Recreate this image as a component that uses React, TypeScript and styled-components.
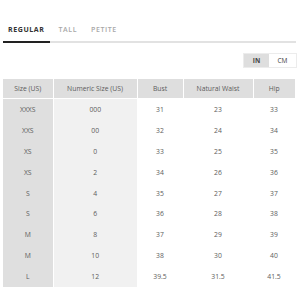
import React from "react";
import styled, { createGlobalStyle } from "styled-components";

const GlobalStyle = createGlobalStyle`
  body {
    margin: 0;
    background: #fff;
    font-family: "Open Sans", "Liberation Sans", sans-serif;
  }
`;

const Page = styled.div`
  width: 300px;
  padding: 20px 4px 0 3px;
  box-sizing: border-box;
`;

const Tabs = styled.div`
  display: flex;
  border-bottom: 2px solid #e2e2e2;
  height: 21px;
`;

const Tab = styled.div<{ $active?: boolean }>`
  font-size: 7px;
  font-weight: ${p => (p.$active ? 700 : 600)};
  letter-spacing: 0.6px;
  color: ${p => (p.$active ? "#333" : "#a8a8a8")};
  padding: 5px 5px 0;
  margin-right: 4px;
  margin-bottom: -2px;
  border-bottom: 2px solid ${p => (p.$active ? "#222" : "transparent")};
`;

const ToggleRow = styled.div`
  display: flex;
  justify-content: flex-end;
  margin-top: 10px;
  margin-right: -1px;
`;

const Toggle = styled.div`
  display: flex;
  border: 1px solid #ececec;
`;

const Unit = styled.div<{ $active?: boolean }>`
  width: ${p => (p.$active ? "25px" : "27px")};
  height: 13px;
  display: flex;
  align-items: center;
  justify-content: center;
  font-size: 6.5px;
  font-weight: ${p => (p.$active ? 700 : 400)};
  color: #444;
  background: ${p => (p.$active ? "#dedede" : "#fff")};
`;

const Table = styled.table`
  margin-top: 11px;
  width: 292px;
  border-collapse: collapse;
  table-layout: fixed;
  color: #5c5c5c;
  font-size: 6.8px;
`;

const Th = styled.th`
  height: 19px;
  padding: 0;
  font-weight: 400;
  background: #dedede;
  border-right: 1px solid #fff;
  border-bottom: 1px solid #fff;
  text-align: center;
  &:last-child {
    border-right: none;
  }
`;

const Td = styled.td<{ $tone?: "dark" | "light" }>`
  height: 20.9px;
  padding: 0;
  text-align: center;
  background: ${p =>
    p.$tone === "dark" ? "#dfdfdf" : p.$tone === "light" ? "#f1f1f1" : "#fff"};
  border-right: ${p => (p.$tone === "dark" ? "1px solid #fff" : "none")};
`;

const rows = [
  ["XXXS", "000", "31", "23", "33"],
  ["XXS", "00", "32", "24", "34"],
  ["XS", "0", "33", "25", "35"],
  ["XS", "2", "34", "26", "36"],
  ["S", "4", "35", "27", "37"],
  ["S", "6", "36", "28", "38"],
  ["M", "8", "37", "29", "39"],
  ["M", "10", "38", "30", "40"],
  ["L", "12", "39.5", "31.5", "41.5"],
];

const App: React.FC = () => {
  return (
    <Page>
      <GlobalStyle />
      <Tabs>
        <Tab $active>REGULAR</Tab>
        <Tab>TALL</Tab>
        <Tab>PETITE</Tab>
      </Tabs>
      <ToggleRow>
        <Toggle>
          <Unit $active>IN</Unit>
          <Unit>CM</Unit>
        </Toggle>
      </ToggleRow>
      <Table>
        <colgroup>
          <col style={{ width: 50 }} />
          <col style={{ width: 84 }} />
          <col style={{ width: 46 }} />
          <col style={{ width: 70 }} />
          <col style={{ width: 42 }} />
        </colgroup>
        <thead>
          <tr>
            <Th>Size (US)</Th>
            <Th>Numeric Size (US)</Th>
            <Th>Bust</Th>
            <Th>Natural Waist</Th>
            <Th>Hip</Th>
          </tr>
        </thead>
        <tbody>
          {rows.map((r, i) => (
            <tr key={i}>
              <Td $tone="dark">{r[0]}</Td>
              <Td $tone="light">{r[1]}</Td>
              <Td>{r[2]}</Td>
              <Td>{r[3]}</Td>
              <Td>{r[4]}</Td>
            </tr>
          ))}
        </tbody>
      </Table>
    </Page>
  );
};

export default App;
